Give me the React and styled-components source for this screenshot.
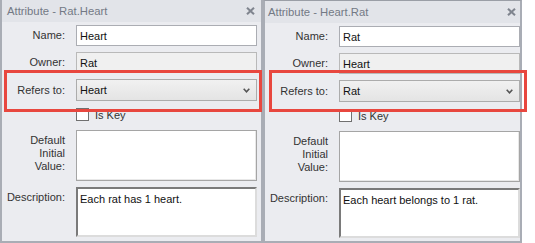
import React from 'react';
import styled, { createGlobalStyle } from 'styled-components';

const Global = createGlobalStyle`
  html, body {
    margin: 0;
    padding: 0;
    background: #ffffff;
    width: 535px;
    height: 243px;
    overflow: hidden;
  }
  * { box-sizing: border-box; }
`;

const Page = styled.div`
  display: flex;
  align-items: flex-start;
  font-family: 'Liberation Sans', Arial, sans-serif;
  font-size: 11px;
  color: #333;
`;

const Panel = styled.div`
  position: relative;
  width: ${(p) => p.$width}px;
  height: 243px;
  background: #ebecf0;
  border: 2px solid #a9adb5;
  border-top: ${(p) => (p.$topLine ? '1px solid #9a9ea6' : 'none')};
`;

const TitleBar = styled.div`
  display: flex;
  align-items: center;
  justify-content: space-between;
  height: 22px;
  padding: 0 ${(p) => p.$closeRight}px 0 ${(p) => p.$textLeft}px;
  background: #e2e4e9;
  color: #737985;
  font-size: 11.3px;
`;

const Close = styled.svg`
  width: 9px;
  height: 8px;
`;

const Form = styled.div`
  display: grid;
  grid-template-columns: 63px 181px;
  column-gap: 11px;
  row-gap: 6px;
  padding-top: 3px;
`;

const Label = styled.div`
  text-align: right;
  line-height: 13px;
  color: #333;
  align-self: ${(p) => (p.$top ? 'start' : 'center')};
  padding-top: ${(p) => (p.$top ? '4px' : '0')};
`;

const Input = styled.div`
  height: 21px;
  display: flex;
  align-items: center;
  padding-left: 3px;
  background: ${(p) => (p.$readOnly ? '#f0f0f0' : '#ffffff')};
  border: 1px solid ${(p) => (p.$readOnly ? '#b9b9b9' : '#abadb3')};
  color: #111;
`;

const Select = styled.div`
  height: 22px;
  display: flex;
  align-items: center;
  justify-content: space-between;
  padding: 0 6px 0 3px;
  background: linear-gradient(#f1f1f1, #e4e4e4);
  border: 1px solid #acacac;
  color: #111;
`;

const Chevron = styled.svg`
  width: 7px;
  height: 5px;
`;

const CheckRow = styled.div`
  grid-column: 2;
  display: flex;
  align-items: center;
  gap: 6px;
  height: 13px;
  margin: 1px 0 3px;
  color: #333;
`;

const Box = styled.span`
  width: 13px;
  height: 13px;
  background: #fff;
  border: 1px solid #707070;
`;

const TextArea = styled.div`
  height: ${(p) => p.$h}px;
  padding: 4px 2px;
  line-height: 13px;
  background: #fff;
  color: #111;
  border: ${(p) => (p.$inset ? '2px solid' : '1px solid #a5a5a5')};
  border-color: ${(p) => (p.$inset ? '#7a7a7a #dcdcdc #dcdcdc #7a7a7a' : '#a5a5a5')};
  box-shadow: ${(p) => (p.$inset ? 'none' : 'inset -1px -1px 0 #e8e8e8')};
`;

const Highlight = styled.div`
  position: absolute;
  left: ${(p) => p.$left}px;
  top: ${(p) => p.$top}px;
  width: 258px;
  height: 42px;
  border: 3px solid #e8473f;
  pointer-events: none;
`;

function CloseIcon() {
  return (
    <Close viewBox="0 0 9 8">
      <path d="M1 0.8 L8 7.2 M8 0.8 L1 7.2" stroke="#80858f" strokeWidth="2.1" />
    </Close>
  );
}

function AttributePanel(props) {
  return (
    <Panel $width={props.width} $topLine={props.topLine}>
      <TitleBar $textLeft={props.textLeft} $closeRight={props.closeRight}>
        <span>{props.title}</span>
        <CloseIcon />
      </TitleBar>
      <Form>
        <Label>Name:</Label>
        <Input>{props.name}</Input>
        <Label>Owner:</Label>
        <Input $readOnly>{props.owner}</Input>
        <Label>Refers to:</Label>
        <Select>
          <span>{props.refersTo}</span>
          <Chevron viewBox="0 0 7 5">
            <path d="M0.7 0.8 L3.5 3.8 L6.3 0.8" stroke="#555" strokeWidth="1.6" fill="none" />
          </Chevron>
        </Select>
        <CheckRow>
          <Box />
          <span>Is Key</span>
        </CheckRow>
        <Label $top>
          Default
          <br />
          Initial
          <br />
          Value:
        </Label>
        <TextArea $h={51} />
        <Label $top>Description:</Label>
        <TextArea $h={50} $inset>{props.description}</TextArea>
      </Form>
      <Highlight $left={props.boxLeft} $top={props.topLine ? 69 : 70} />
    </Panel>
  );
}

export default function App() {
  return (
    <Page>
      <Global />
      <AttributePanel
        width={263}
        title="Attribute - Rat.Heart"
        textLeft={5}
        closeRight={6}
        name="Heart"
        owner="Rat"
        refersTo="Heart"
        description="Each rat has 1 heart."
        boxLeft={2}
      />
      <AttributePanel
        width={259}
        topLine
        title="Attribute - Heart.Rat"
        textLeft={3}
        closeRight={4}
        name="Rat"
        owner="Heart"
        refersTo="Rat"
        description="Each heart belongs to 1 rat."
        boxLeft={4}
      />
    </Page>
  );
}
